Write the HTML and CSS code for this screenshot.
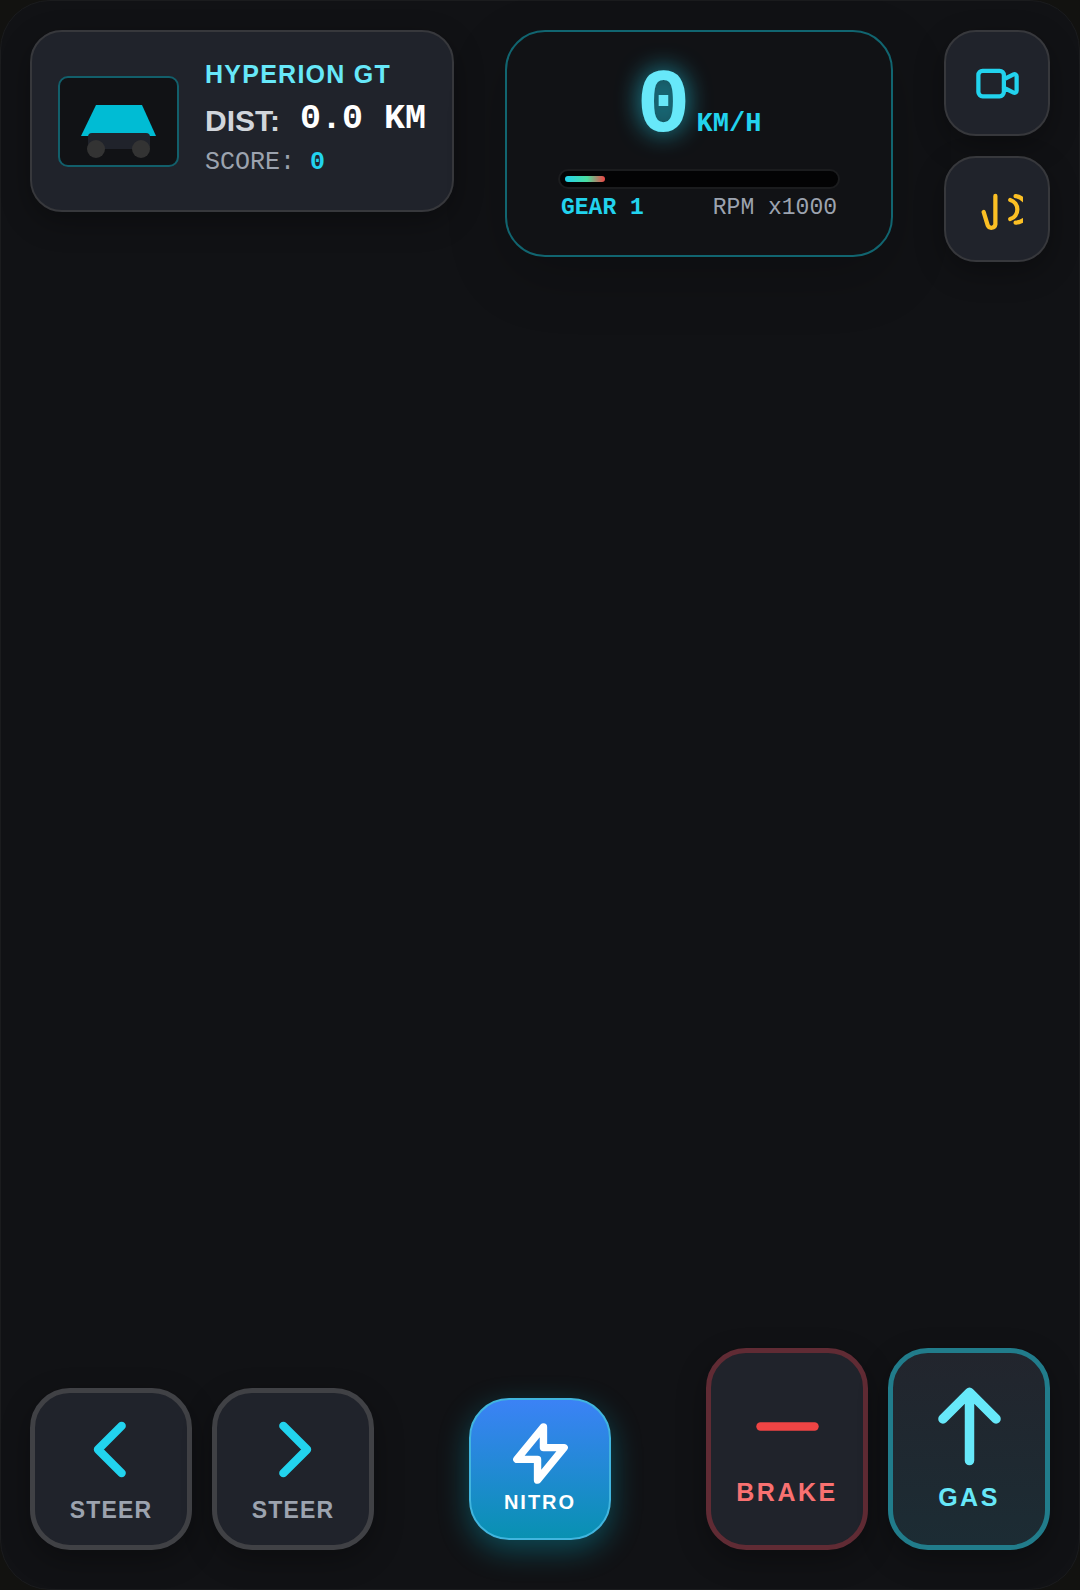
FILE: index.html
```html
<!DOCTYPE html>
<html lang="en">
<head>
  <meta charset="UTF-8">
  <meta name="viewport" content="width=device-width, initial-scale=1.0">
  <title>Hyperion GT</title>
  <link rel="stylesheet" href="styles.css">
</head>
<body>
  <main class="game">
    <header class="hud">
      <section class="panel car-info">
        <svg class="car" viewBox="0 0 117 87" aria-hidden="true">
          <path class="car-body" d="M36 27H82L96 58H21z"/>
          <rect class="chassis" x="28" y="55" width="62" height="16" rx="4"/>
          <circle class="wheel" cx="36" cy="71" r="9"/>
          <circle class="wheel" cx="81" cy="71" r="9"/>
        </svg>
        <div class="stats">
          <h1 class="car-name">HYPERION GT</h1>
          <p class="dist">DIST: <span class="dist-value">0.0 KM</span></p>
          <p class="score">SCORE: <span class="score-value">0</span></p>
        </div>
      </section>

      <section class="speedo">
        <div class="speed">
          <span class="speed-value">0</span>
          <span class="speed-unit">KM/H</span>
        </div>
        <div class="rpm">
          <div class="rpm-fill" style="width: 15%"></div>
        </div>
        <div class="rpm-labels">
          <span class="gear">GEAR 1</span>
          <span>RPM x1000</span>
        </div>
      </section>

      <div class="tools">
        <button class="panel tool camera" type="button" aria-label="Camera">
          <svg class="icon-tool" viewBox="0 0 24 24">
            <path d="M15 10l4.553-2.276A1 1 0 0121 8.618v6.764a1 1 0 01-1.447.894L15 14M5 18h8a2 2 0 002-2V8a2 2 0 00-2-2H5a2 2 0 00-2 2v8a2 2 0 002 2z"/>
          </svg>
        </button>
        <button class="panel tool horn" type="button" aria-label="Horn">
          <svg class="icon-tool" viewBox="0 0 24 24">
            <path d="M11 5.600V19a1.900 1.900 0 01-3.600.5L5.500 13.200M18 7.500a4.700 4.700 0 010 9M20.500 5.700q2 .1 4 2.100M20.500 18.200q2 0 4-1.400"/>
          </svg>
        </button>
      </div>
    </header>

    <footer class="controls">
      <div class="group">
        <button class="pedal steer" type="button">
          <svg class="icon-steer" viewBox="0 0 24 24"><path d="M15 19l-7-7 7-7"/></svg>
          <span>STEER</span>
        </button>
        <button class="pedal steer" type="button">
          <svg class="icon-steer" viewBox="0 0 24 24"><path d="M9 5l7 7-7 7"/></svg>
          <span>STEER</span>
        </button>
      </div>

      <button class="nitro" type="button">
        <svg class="icon-nitro" viewBox="0 0 24 24"><path d="M13 10V3L4 14h7v7l9-11h-7z"/></svg>
        <span>NITRO</span>
      </button>

      <div class="group">
        <button class="pedal brake" type="button">
          <svg class="icon-brake" viewBox="0 0 24 24"><path d="M20 12H4"/></svg>
          <span>BRAKE</span>
        </button>
        <button class="pedal gas" type="button">
          <svg class="icon-gas" viewBox="0 0 24 24"><path d="M5 10l7-7m0 0l7 7m-7-7v18"/></svg>
          <span>GAS</span>
        </button>
      </div>
    </footer>
  </main>
</body>
</html>
```
FILE: styles.css
```css
* {
  box-sizing: border-box;
}
body {
  margin: 0;
  background: #121210;
  color: #fff;
  font-family: "Liberation Sans", Arial, sans-serif;
}
h1, p {
  margin: 0;
}
button {
  font-family: inherit;
  font-weight: bold;
  padding: 0;
  cursor: pointer;
}
svg {
  display: block;
  fill: none;
  stroke: currentColor;
  stroke-linecap: round;
  stroke-linejoin: round;
}
.game {
  min-height: 100vh;
  display: flex;
  flex-direction: column;
  justify-content: space-between;
  padding: 29px 29px 39px;
  background: #111215;
  border: 1px solid #1b1c1e;
  border-radius: 50px;
}

/* top bar */
.hud {
  display: flex;
  justify-content: space-between;
  align-items: flex-start;
}
.panel {
  background: #20232b;
  border: 2px solid #37383c;
  border-radius: 32px;
  box-shadow: 0 10px 30px rgba(0, 0, 0, 0.3);
}
.car-info {
  display: flex;
  align-items: center;
  gap: 26px;
  height: 182px;
  padding: 0 26px;
}
.car {
  width: 121px;
  height: 91px;
  background: #111215;
  border: 2px solid #125f6b;
  border-radius: 10px;
  stroke: none;
}
.car-body {
  fill: #00bcd4;
}
.chassis {
  fill: #20232b;
}
.wheel {
  fill: #333;
}
.stats {
  padding-bottom: 5px;
}
.car-name {
  margin-bottom: 5px;
  font-size: 25px;
  line-height: 36px;
  letter-spacing: 0.05em;
  color: #67e8f9;
}
.dist {
  display: flex;
  align-items: center;
  gap: 20px;
  font-size: 30px;
  font-weight: bold;
  line-height: 48px;
  color: #d1d5db;
}
.dist-value {
  font-family: "Liberation Mono", monospace;
  font-size: 35px;
  line-height: 40px;
  padding-bottom: 4px;
  color: #fff;
}
.score {
  font: 25px/36px "Liberation Mono", monospace;
  color: #9ca3af;
}
.score-value {
  font-weight: bold;
  color: #22d3ee;
}

.speedo {
  width: 388px;
  height: 227px;
  padding: 30px 51px;
  border: 2px solid #116570;
  border-radius: 40px;
  box-shadow: 0 20px 60px rgba(0, 0, 0, 0.2);
  font-family: "Liberation Mono", monospace;
}
.speed {
  display: flex;
  justify-content: center;
  align-items: baseline;
  gap: 6px;
  height: 107px;
  line-height: 90px;
}
.speed-value {
  font-size: 90px;
  font-weight: bold;
  color: #67e8f9;
  text-shadow: 0 0 25px rgba(34, 211, 238, 0.8);
}
.speed-unit {
  font-size: 27px;
  font-weight: bold;
  color: #22d3ee;
}
.rpm {
  height: 20px;
  padding: 5px;
  background: #030304;
  border: 2px solid #1b1c1e;
  border-radius: 10px;
}
.rpm-fill {
  height: 6px;
  border-radius: 3px;
  background: linear-gradient(90deg, #22d3ee, #4ade9f 55%, #ef4444);
}
.rpm-labels {
  display: flex;
  justify-content: space-between;
  padding: 0 3px;
  font-size: 23px;
  line-height: 38px;
  color: #9ca3af;
}
.gear {
  font-weight: bold;
  color: #22d3ee;
}

.tools {
  display: flex;
  flex-direction: column;
  gap: 20px;
}
.tool {
  display: flex;
  align-items: center;
  justify-content: center;
  width: 106px;
  height: 106px;
}
.icon-tool {
  width: 51px;
  height: 51px;
  stroke-width: 2;
}
.camera {
  color: #22d3ee;
}
.horn {
  color: #fbbf24;
}

/* bottom bar */
.controls {
  display: flex;
  justify-content: space-between;
  align-items: flex-end;
}
.group {
  display: flex;
  gap: 20px;
}
.pedal,
.nitro {
  display: flex;
  flex-direction: column;
  align-items: center;
  justify-content: center;
}
.pedal {
  width: 162px;
  height: 202px;
  padding-bottom: 2px;
  border: 5px solid #404145;
  border-radius: 40px;
  background: #20232b;
  box-shadow: 0 10px 30px rgba(0, 0, 0, 0.3);
  font-size: 25px;
  line-height: 38px;
  letter-spacing: 0.1em;
}
.pedal svg {
  margin-bottom: 6px;
}
.steer {
  height: 162px;
  padding-bottom: 0;
  font-size: 23px;
  line-height: 40px;
  letter-spacing: 0.05em;
  color: #9ca3af;
}
.steer .icon-steer {
  width: 81px;
  height: 81px;
  margin-bottom: 0;
  stroke-width: 2.5;
  color: #22d3ee;
}
.brake {
  border-color: #602b34;
  color: #f87171;
}
.icon-brake {
  width: 81px;
  height: 81px;
  stroke-width: 2.5;
  color: #ef4444;
}
.gas {
  border-color: #217c8b;
  background: linear-gradient(#22252d, #1c2c34);
  color: #67e8f9;
}
.icon-gas {
  width: 91px;
  height: 91px;
  stroke-width: 2.5;
}
.nitro {
  width: 142px;
  height: 142px;
  margin-bottom: 10px;
  padding-bottom: 6px;
  border: 2px solid #41b5de;
  border-radius: 40px;
  background: linear-gradient(#3b82f6, #0891b2);
  box-shadow: 0 10px 30px rgba(6, 182, 212, 0.35);
  font-size: 20px;
  line-height: 26px;
  letter-spacing: 0.1em;
  color: #fff;
}
.icon-nitro {
  width: 71px;
  height: 71px;
  stroke-width: 2.5;
}
```
